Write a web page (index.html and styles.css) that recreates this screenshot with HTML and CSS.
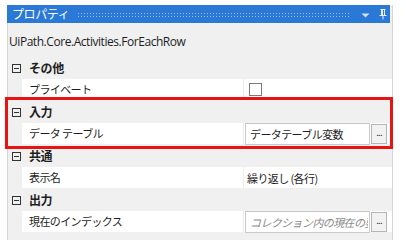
FILE: index.html
```html
<!DOCTYPE html>
<html lang="ja">
<head>
<meta charset="utf-8">
<link rel="stylesheet" href="styles.css">
</head>
<body>
<div class="panel">
  <div class="titlebar">
    <span class="title">プロパティ</span>
    <span class="dots"></span>
    <svg class="drop" width="9" height="5" viewBox="0 0 9 5"><path d="M0.5 0.5 L8.5 0.5 L4.5 4.5 Z" fill="#cfe0f7"/></svg>
    <svg class="pin" width="8" height="11" viewBox="0 0 8 11"><path d="M1.5 0.5 H6.5 M2.5 0.5 V6.5 M5.5 0.5 V6.5 M0.5 6.5 H7.5 M4 6.5 V10.5 M3.5 1 V6" stroke="#e6eefb" stroke-width="1" fill="none"/></svg>
  </div>
  <div class="typename">UiPath.Core.Activities.ForEachRow</div>
  <div class="grid">
    <div class="cat"><span class="tog"></span><span class="catname">その他</span></div>
    <div class="prop"><span class="name">プライベート</span><span class="val"><span class="check"></span></span></div>
    <div class="cat"><span class="tog"></span><span class="catname">入力</span></div>
    <div class="prop"><span class="name">データ テーブル</span><span class="val"><span class="box">データテーブル変数</span><span class="btn">...</span></span></div>
    <div class="cat"><span class="tog"></span><span class="catname">共通</span></div>
    <div class="prop"><span class="name">表示名</span><span class="val"><span class="plain">繰り返し (各行)</span></span></div>
    <div class="cat"><span class="tog"></span><span class="catname">出力</span></div>
    <div class="prop"><span class="name">現在のインデックス</span><span class="val"><span class="box ph"><span class="phtext">コレクション内の現在の要</span></span><span class="btn">...</span></span></div>
  </div>
</div>
<div class="highlight"></div>
</body>
</html>
```
FILE: styles.css
```css
html, body {
  margin: 0;
  padding: 0;
  background: #ffffff;
}
body {
  width: 406px;
  height: 251px;
  position: relative;
  overflow: hidden;
  font-family: "Noto Sans CJK JP", "Noto Sans", sans-serif;
  font-size: 11px;
  letter-spacing: -0.6px;
  color: #1e1e1e;
}
.panel {
  margin: 5px 0 0 7px;
  width: 386px;
  height: 235px;
  background: #f0f0f0;
  border-left: 1px solid #d4d4d4;
  border-right: 1px solid #d4d4d4;
  box-sizing: border-box;
}
.titlebar {
  height: 18px;
  margin-right: 2px;
  margin-left: -1px;
  background: #2b79d6;
  display: flex;
  align-items: center;
  padding: 0 0 0 5px;
  color: #fff;
}
.title {
  font-size: 12px;
  letter-spacing: -0.4px;
  line-height: 18px;
  color: #ffffff;
}
.dots {
  flex: 1;
  height: 5px;
  margin: 0 12px 0 8px;
  background-image: radial-gradient(circle, rgba(190, 215, 245, 0.75) 0.6px, transparent 0.9px);
  background-size: 3px 3px;
}
.drop {
  margin-right: 9px;
  margin-top: 3px;
}
.pin {
  margin-right: 3px;
}
.typename {
  font-family: "Open Sans", "Noto Sans", sans-serif;
  font-size: 12px;
  letter-spacing: -0.45px;
  line-height: 18px;
  padding: 10px 0 6px 1px;
  color: #1e1e1e;
}
.grid {
  display: flex;
  flex-direction: column;
}
.cat {
  height: 22px;
  display: flex;
  align-items: center;
}
.tog {
  width: 7px;
  height: 7px;
  border: 1px solid #333;
  margin-left: 4px;
  position: relative;
  box-sizing: content-box;
}
.tog::after {
  content: "";
  position: absolute;
  left: 1px;
  right: 1px;
  top: 3px;
  height: 1px;
  background: #333;
}
.catname {
  font-weight: bold;
  font-size: 12px;
  letter-spacing: -0.4px;
  margin-left: 8px;
  line-height: 22px;
}
.prop {
  height: 22px;
  margin-left: 14px;
  background: #ffffff;
  display: flex;
  border-bottom: 1px solid #f0f0f0;
  box-sizing: border-box;
}
.name {
  width: 222px;
  padding-left: 7px;
  line-height: 21px;
  border-right: 1px solid #ececec;
  box-sizing: border-box;
}
.val {
  flex: 1;
  display: flex;
  align-items: center;
  padding-left: 1px;
}
.check {
  width: 11px;
  height: 11px;
  border: 1px solid #7a7a7a;
  margin-left: 4px;
  background: #fff;
}
.plain {
  padding-left: 2px;
}
.box {
  width: 125px;
  height: 22px;
  border: 1px solid #c9c9c9;
  background: #fff;
  box-sizing: border-box;
  padding-left: 4px;
  line-height: 20px;
  white-space: nowrap;
  overflow: hidden;
}
.ph {
  font-style: italic;
  color: #8a8a8a;
}
.phtext {
  display: inline-block;
  max-width: 118px;
  overflow: hidden;
  vertical-align: top;
}
.btn {
  width: 16px;
  height: 20px;
  margin-left: 1px;
  border: 1px solid #b5b5b5;
  background: #f2f2f2;
  box-sizing: border-box;
  font-size: 10px;
  line-height: 14px;
  text-align: center;
  color: #333;
  letter-spacing: -1px;
}
.highlight {
  position: absolute;
  left: 5px;
  top: 97px;
  width: 388px;
  height: 52px;
  border: 3px solid #e81414;
  box-sizing: border-box;
}
```
